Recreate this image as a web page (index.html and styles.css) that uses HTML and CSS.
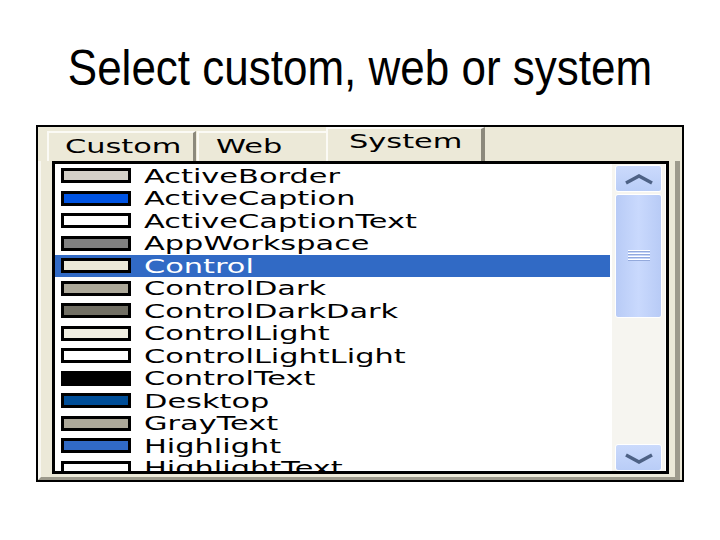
FILE: index.html
```html
<!DOCTYPE html>
<html>
<head>
    <title>Select custom, web or system</title>
    <link rel="stylesheet" href="styles.css">
</head>
<body>
    <h1 class="title">Select custom, web or system</h1>

    <div class="dialog">
        <div class="tabs">
            <div class="tab tab-custom"><span class="label">Custom</span></div>
            <div class="tab tab-web"><span class="label">Web</span></div>
            <div class="tab tab-system active"><span class="label">System</span></div>
        </div>

        <div class="page">
            <div class="listbox">
                <ul class="items">
                    <li class="item"><span class="swatch" style="background:#d4d0c8"></span><span class="label">ActiveBorder</span></li>
                    <li class="item"><span class="swatch" style="background:#0054e3"></span><span class="label">ActiveCaption</span></li>
                    <li class="item"><span class="swatch" style="background:#ffffff"></span><span class="label">ActiveCaptionText</span></li>
                    <li class="item"><span class="swatch" style="background:#808080"></span><span class="label">AppWorkspace</span></li>
                    <li class="item selected"><span class="swatch" style="background:#ece9d8"></span><span class="label">Control</span></li>
                    <li class="item"><span class="swatch" style="background:#aca899"></span><span class="label">ControlDark</span></li>
                    <li class="item"><span class="swatch" style="background:#716f64"></span><span class="label">ControlDarkDark</span></li>
                    <li class="item"><span class="swatch" style="background:#f1efe2"></span><span class="label">ControlLight</span></li>
                    <li class="item"><span class="swatch" style="background:#ffffff"></span><span class="label">ControlLightLight</span></li>
                    <li class="item"><span class="swatch" style="background:#000000"></span><span class="label">ControlText</span></li>
                    <li class="item"><span class="swatch" style="background:#004e98"></span><span class="label">Desktop</span></li>
                    <li class="item"><span class="swatch" style="background:#aca899"></span><span class="label">GrayText</span></li>
                    <li class="item"><span class="swatch" style="background:#316ac5"></span><span class="label">Highlight</span></li>
                    <li class="item"><span class="swatch" style="background:#ffffff"></span><span class="label">HighlightText</span></li>
                </ul>

                <div class="scrollbar">
                    <div class="sb-button">
                        <svg width="30" height="12" viewBox="0 0 30 12">
                            <polyline points="2,10 15,3 28,10" fill="none" stroke="#4d6185" stroke-width="3.5"/>
                        </svg>
                    </div>
                    <div class="sb-thumb">
                        <div class="grip">
                            <span></span><span></span><span></span><span></span>
                        </div>
                    </div>
                    <div class="sb-track"></div>
                    <div class="sb-button">
                        <svg width="30" height="12" viewBox="0 0 30 12">
                            <polyline points="2,3 15,10 28,3" fill="none" stroke="#4d6185" stroke-width="3.5"/>
                        </svg>
                    </div>
                </div>
            </div>
        </div>
    </div>
</body>
</html>
```

FILE: styles.css
```css
body {
    margin: 0;
    background-color: #ffffff;
}

.title {
    margin: 44px 0 0 0;
    height: 81px;
    font-family: "Liberation Sans", Arial, sans-serif;
    font-size: 44px;
    font-weight: normal;
    line-height: 52px;
    text-align: center;
    color: #000;
    transform: scaleY(1.12);
    transform-origin: center 41px;
}

.dialog {
    box-sizing: border-box;
    width: 648px;
    height: 357px;
    margin: 0 36px;
    border: 2px solid #000;
    background-color: #ece9d8;
}

.label {
    display: inline-block;
    font-family: "DejaVu Sans", Verdana, sans-serif;
    font-size: 19px;
    white-space: nowrap;
    transform: scaleX(1.6);
    transform-origin: left center;
}

/* tabs */
.tabs {
    display: flex;
    align-items: flex-end;
    height: 34px;
    padding-left: 9px;
}

.tab {
    box-sizing: border-box;
    height: 30px;
    line-height: 27px;
    border-top: 2px solid #fbfaf5;
    border-left: 2px solid #fbfaf5;
    background-color: #ece9d8;
    overflow: hidden;
}

.tab-custom {
    width: 149px;
    padding-left: 16px;
    border-right: 3px solid #8c897c;
}

.tab-web {
    width: 129px;
    margin-left: 1px;
    padding-left: 17px;
}

.tab-system {
    width: 159px;
    padding-left: 21px;
    border-right: 4px solid #8c897c;
}

.tab.active {
    height: 34px;
    line-height: 25px;
}

/* tab page */
.page {
    box-sizing: border-box;
    height: 319px;
    margin-right: 2px;
    padding: 0 6px 1px 11px;
    border-left: 3px solid #f8f7f1;
    border-right: 5px solid #9d9a8c;
    border-bottom: 3px solid #9d9a8c;
}

.listbox {
    box-sizing: border-box;
    height: 313px;
    display: flex;
    border: 3px solid #000;
    background-color: #fff;
    overflow: hidden;
}

.items {
    list-style: none;
    margin: 0;
    padding: 0.5px 0 0 0;
    width: 555px;
    overflow: hidden;
}

.item {
    display: flex;
    align-items: center;
    height: 22.5px;
    line-height: 22.5px;
    color: #000;
}

.item.selected {
    background-color: #316ac5;
    color: #fff;
}

.swatch {
    box-sizing: border-box;
    width: 70px;
    height: 15px;
    margin-left: 6px;
    margin-right: 13px;
    border: 3px solid #000;
    flex-shrink: 0;
}

/* scrollbar */
.scrollbar {
    width: 53px;
    margin-left: 2px;
    padding: 1px 3px 0 3px;
    box-sizing: border-box;
    background-color: #f6f5f0;
    display: flex;
    flex-direction: column;
}

.sb-button {
    height: 25px;
    flex-shrink: 0;
    display: flex;
    align-items: center;
    justify-content: center;
    border: 1px solid #fff;
    border-radius: 3px;
    background: linear-gradient(#cbdafc, #b9cdf7);
}

.sb-thumb {
    height: 122px;
    flex-shrink: 0;
    margin-top: 2px;
    display: flex;
    align-items: center;
    justify-content: center;
    border: 1px solid #fff;
    border-radius: 3px;
    background: linear-gradient(90deg, #b8cbf6, #c9d9fd 50%, #b8cbf6);
}

.grip span {
    display: block;
    width: 22px;
    height: 1px;
    margin-bottom: 2px;
    background-color: #fff;
    box-shadow: 0 1px 0 #93a9dc;
}

.sb-track {
    flex: 1;
}
```
